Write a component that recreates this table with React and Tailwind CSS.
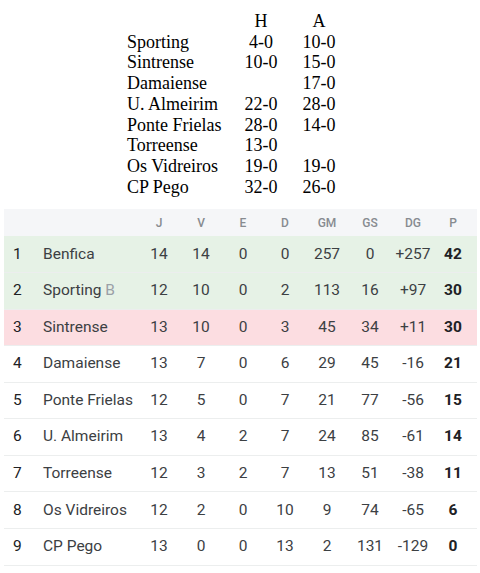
const results = [
  ["Sporting", "4-0", "10-0"],
  ["Sintrense", "10-0", "15-0"],
  ["Damaiense", "", "17-0"],
  ["U. Almeirim", "22-0", "28-0"],
  ["Ponte Frielas", "28-0", "14-0"],
  ["Torreense", "13-0", ""],
  ["Os Vidreiros", "19-0", "19-0"],
  ["CP Pego", "32-0", "26-0"],
];

const standings = [
  { pos: 1, team: "Benfica", j: 14, v: 14, e: 0, d: 0, gm: 257, gs: 0, dg: "+257", p: 42, bg: "bg-[#e6f2e6]" },
  { pos: 2, team: "Sporting", suffix: "B", j: 12, v: 10, e: 0, d: 2, gm: 113, gs: 16, dg: "+97", p: 30, bg: "bg-[#e6f2e6]" },
  { pos: 3, team: "Sintrense", j: 13, v: 10, e: 0, d: 3, gm: 45, gs: 34, dg: "+11", p: 30, bg: "bg-[#fcdde1]" },
  { pos: 4, team: "Damaiense", j: 13, v: 7, e: 0, d: 6, gm: 29, gs: 45, dg: "-16", p: 21 },
  { pos: 5, team: "Ponte Frielas", j: 12, v: 5, e: 0, d: 7, gm: 21, gs: 77, dg: "-56", p: 15 },
  { pos: 6, team: "U. Almeirim", j: 13, v: 4, e: 2, d: 7, gm: 24, gs: 85, dg: "-61", p: 14 },
  { pos: 7, team: "Torreense", j: 12, v: 3, e: 2, d: 7, gm: 13, gs: 51, dg: "-38", p: 11 },
  { pos: 8, team: "Os Vidreiros", j: 12, v: 2, e: 0, d: 10, gm: 9, gs: 74, dg: "-65", p: 6 },
  { pos: 9, team: "CP Pego", j: 13, v: 0, e: 0, d: 13, gm: 2, gs: 131, dg: "-129", p: 0 },
];

const cols = "grid grid-cols-[39px_95px_42px_42px_42px_42px_42px_44px_42px_38px_1fr] items-center";

const App = () => {
  return (
    <div className="w-[480px] h-[573px] bg-white overflow-hidden">
      <div className="pt-[11px] pl-[127px] font-['Liberation_Serif',serif] text-[18px] leading-[20.7px] text-black">
        <div className="grid grid-cols-[110px_48px_68px]">
          <span></span>
          <span className="text-center">H</span>
          <span className="text-center">A</span>
        </div>
        {results.map(([team, h, a]) => (
          <div key={team} className="grid grid-cols-[110px_48px_68px]">
            <span className="whitespace-nowrap">{team}</span>
            <span className="text-center">{h}</span>
            <span className="text-center">{a}</span>
          </div>
        ))}
      </div>

      <div className="mt-[12px] mx-[4px] w-[473px] font-['Roboto',sans-serif]">
        <div className={`${cols} h-[27px] bg-[#f5f6f8] text-[12px] font-medium text-[#878b90]`}>
          <span></span>
          <span></span>
          <span className="text-center">J</span>
          <span className="text-center">V</span>
          <span className="text-center">E</span>
          <span className="text-center">D</span>
          <span className="text-center">GM</span>
          <span className="text-center">GS</span>
          <span className="text-center">DG</span>
          <span className="text-center">P</span>
          <span></span>
        </div>
        {standings.map((r) => (
          <div
            key={r.pos}
            className={`${cols} h-[36.6px] border-b border-[#eceeee] text-[15.5px] text-[#3c4043] ${r.bg || "bg-white"}`}
          >
            <span className="pl-[9px] text-[#202124]">{r.pos}</span>
            <span className="whitespace-nowrap">
              {r.team}
              {r.suffix && <span className="text-[#9aa0a6]"> {r.suffix}</span>}
            </span>
            <span className="text-center">{r.j}</span>
            <span className="text-center">{r.v}</span>
            <span className="text-center">{r.e}</span>
            <span className="text-center">{r.d}</span>
            <span className="text-center">{r.gm}</span>
            <span className="text-center">{r.gs}</span>
            <span className="text-center">{r.dg}</span>
            <span className="text-center font-bold text-[#202124]">{r.p}</span>
            <span></span>
          </div>
        ))}
      </div>
    </div>
  );
};

export default App;
